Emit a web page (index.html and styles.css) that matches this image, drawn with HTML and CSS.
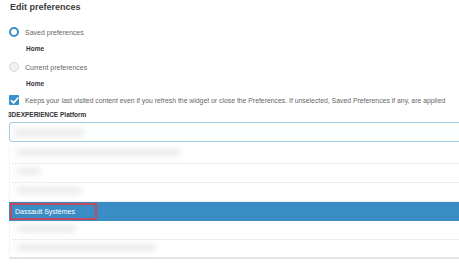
FILE: index.html
```html
<!DOCTYPE html>
<html>
<head>
<meta charset="utf-8">
<link rel="stylesheet" href="styles.css">
</head>
<body>
<div class="panel">
  <h1 class="title">Edit preferences</h1>
  <div class="opt">
    <span class="radio radio-on"></span>
    <span class="opt-label">Saved preferences</span>
  </div>
  <div class="sub">Home</div>
  <div class="opt">
    <span class="radio"></span>
    <span class="opt-label">Current preferences</span>
  </div>
  <div class="sub">Home</div>
  <div class="check-row">
    <span class="check"><svg width="9" height="9" viewBox="0 0 10 10"><path d="M1.5 5.2 L4 7.6 L8.7 2.3" fill="none" stroke="#fff" stroke-width="1.8" stroke-linecap="round" stroke-linejoin="round"/></svg></span>
    <span class="check-label">Keeps your last visited content even if you refresh the widget or close the Preferences. If unselected, Saved Preferences if any, are applied</span>
  </div>
  <div class="field-label">3DEXPERIENCE Platform</div>
  <div class="input"><span class="blur b1"></span></div>
  <ul class="list">
    <li class="item"><span class="blur b2"></span></li>
    <li class="item"><span class="blur b3"></span></li>
    <li class="item"><span class="blur b4"></span></li>
    <li class="item selected"><span class="sel-text">Dassault Systèmes</span></li>
    <li class="item"><span class="blur b5"></span></li>
    <li class="item last"><span class="blur b6"></span></li>
  </ul>
</div>
</body>
</html>
```
FILE: styles.css
```css
html, body {
  margin: 0;
  padding: 0;
  background: #fff;
  font-family: "Liberation Sans", Arial, sans-serif;
  color: #555;
}
.panel {
  padding: 2px 0 0 9px;
  overflow: hidden;
}
.title {
  margin: 0 0 15px 1px;
  font-size: 9px;
  font-weight: bold;
  color: #3d3d3d;
  line-height: 10px;
}
.opt {
  display: flex;
  align-items: center;
  height: 10px;
}
.radio {
  box-sizing: border-box;
  width: 10px;
  height: 10px;
  border-radius: 50%;
  border: 1px solid #d6d6d6;
  background: #f2f2f2;
  margin: 0 6px 0 0;
}
.radio-on {
  border: 2.5px solid #3b8fca;
  background: #fff;
}
.opt-label {
  font-size: 7px;
  color: #666;
}
.sub {
  margin: 7px 0 8px 17px;
  font-size: 6.5px;
  font-weight: bold;
  color: #333;
  line-height: 10px;
}
.check-row {
  display: flex;
  align-items: center;
  margin-top: -2px;
  height: 10px;
}
.check {
  box-sizing: border-box;
  width: 10px;
  height: 10px;
  background: #3b8fca;
  border-radius: 1px;
  display: flex;
  align-items: center;
  justify-content: center;
  margin-right: 6px;
}
.check-label {
  font-size: 6.85px;
  color: #666;
  white-space: nowrap;
}
.field-label {
  margin: 5px 0 0 -1px;
  font-size: 6.5px;
  font-weight: bold;
  color: #333;
  line-height: 10px;
}
.input {
  box-sizing: border-box;
  height: 20px;
  margin-top: 2px;
  margin-right: -6px;
  border: 1px solid #a9c9dd;
  border-radius: 3px;
  background: #fdfeff;
  display: flex;
  align-items: center;
  padding-left: 4px;
}
.blur {
  display: block;
  height: 7px;
  border-radius: 4px;
  background: #d4d4d4;
  filter: blur(3px);
  opacity: 0.5;
  margin-top: -3px;
}
.input .blur { margin-top: 0; }
.b1 { width: 70px; }
.b2 { width: 165px; }
.b3 { width: 25px; }
.b4 { width: 65px; }
.b5 { width: 60px; }
.b6 { width: 140px; }
.list {
  list-style: none;
  margin: 3px -6px 0 0;
  padding: 0;
  border-left: 1px solid #f4f4f4;
}
.item {
  box-sizing: border-box;
  height: 19px;
  padding-left: 4px;
  display: flex;
  align-items: center;
  border-bottom: 1px solid #eeeeee;
  margin-left: 2px;
}
.item.selected {
  background: #3a8cc5;
  border-bottom: 1px solid #3a8cc5;
  margin-left: -1px;
  padding-left: 1px;
}
.sel-text {
  box-sizing: border-box;
  display: flex;
  align-items: center;
  height: 17px;
  width: 87px;
  padding-left: 3px;
  border: 2px solid #c24a5e;
  font-size: 7px;
  color: #fff;
}
.item.last {
  border-bottom: 2px solid #e4e4e4;
  margin-left: -1px;
  padding-left: 7px;
}
```
